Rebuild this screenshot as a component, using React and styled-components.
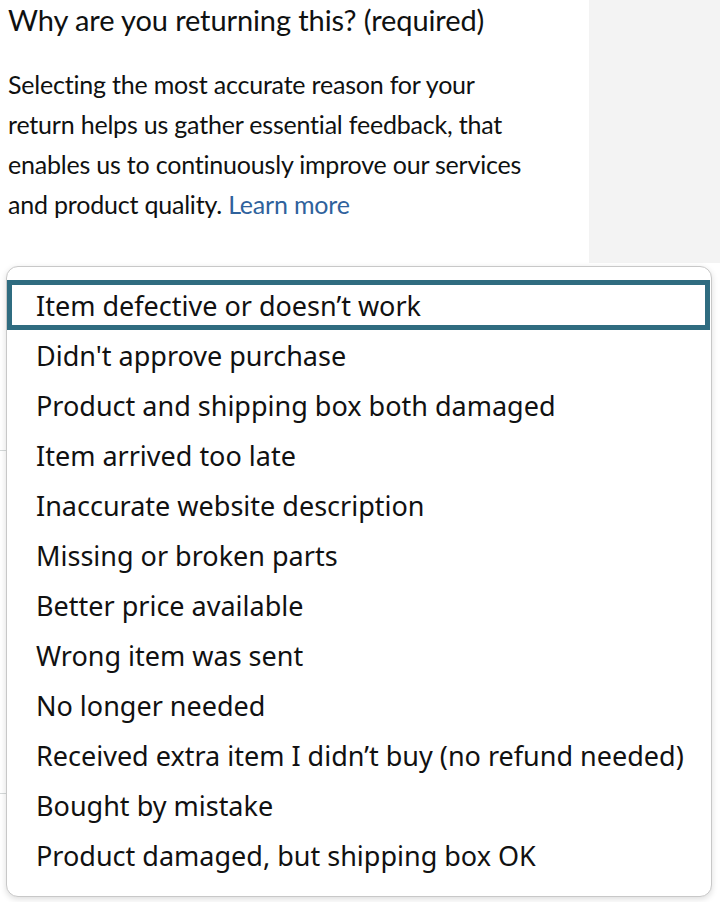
import React from 'react'
import styled, { createGlobalStyle } from 'styled-components'

const GlobalStyle = createGlobalStyle`
  body {
    margin: 0;
    background: #fff;
    color: #0f1111;
    font-family: Lato, "Liberation Sans", sans-serif;
  }
`

const reasons = [
  'Item defective or doesn’t work',
  "Didn't approve purchase",
  'Product and shipping box both damaged',
  'Item arrived too late',
  'Inaccurate website description',
  'Missing or broken parts',
  'Better price available',
  'Wrong item was sent',
  'No longer needed',
  'Received extra item I didn’t buy (no refund needed)',
  'Bought by mistake',
  'Product damaged, but shipping box OK'
]

const Page = styled.div`
  position: relative;
  display: flex;
  height: 902px;
  overflow: hidden;
`

const Main = styled.main`
  width: 589px;
  padding: 0 8px;
  box-sizing: border-box;
`

const Sidebar = styled.aside`
  flex: 1;
  align-self: flex-start;
  height: 263px;
  background: #f3f3f3;
`

const Heading = styled.h1`
  margin: 0;
  padding-top: 2px;
  font-size: 29px;
  font-weight: 400;
  line-height: 36px;
  letter-spacing: -0.1px;
  white-space: nowrap;
`

const Intro = styled.p`
  margin: 26px 0 0;
  font-size: 25px;
  line-height: 40px;
  letter-spacing: -0.2px;
  white-space: nowrap;
`

const LearnMore = styled.a`
  color: #2f629c;
  text-decoration: none;
`

const Divider = styled.hr`
  margin: ${p => p.$gap}px -8px 0;
  border: 0;
  border-top: 1px solid #d5d9d9;
`

const Menu = styled.ul`
  position: absolute;
  top: 266px;
  left: 6px;
  width: 706px;
  height: 631px;
  box-sizing: border-box;
  margin: 0;
  padding: 13px 0 0;
  list-style: none;
  background: #fff;
  border: 1px solid #c8c8c8;
  border-radius: 12px;
  box-shadow: 0 2px 6px rgba(0, 0, 0, 0.14);
`

const Option = styled.li`
  height: 50px;
  box-sizing: border-box;
  display: flex;
  align-items: center;
  padding-left: 24px;
  margin-right: 1px;
  font-family: "Noto Sans", "Open Sans", sans-serif;
  font-size: 27px;
  color: #111;
  white-space: nowrap;
  border: 5px solid ${p => (p.$active ? '#2f6c80' : 'transparent')};
`

export default function App () {
  return (
    <>
      <GlobalStyle />
      <Page>
        <Main>
          <Heading>Why are you returning this? (required)</Heading>
          <Intro>
            Selecting the most accurate reason for your<br />
            return helps us gather essential feedback, that<br />
            enables us to continuously improve our services<br />
            and product quality. <LearnMore href='#'>Learn more</LearnMore>
          </Intro>
          <Divider $gap={226} />
          <Divider $gap={342} />
        </Main>
        <Sidebar />
        <Menu role='listbox'>
          {reasons.map((r, i) => (
            <Option key={r} $active={i === 0} role='option'>{r}</Option>
          ))}
        </Menu>
      </Page>
    </>
  )
}
